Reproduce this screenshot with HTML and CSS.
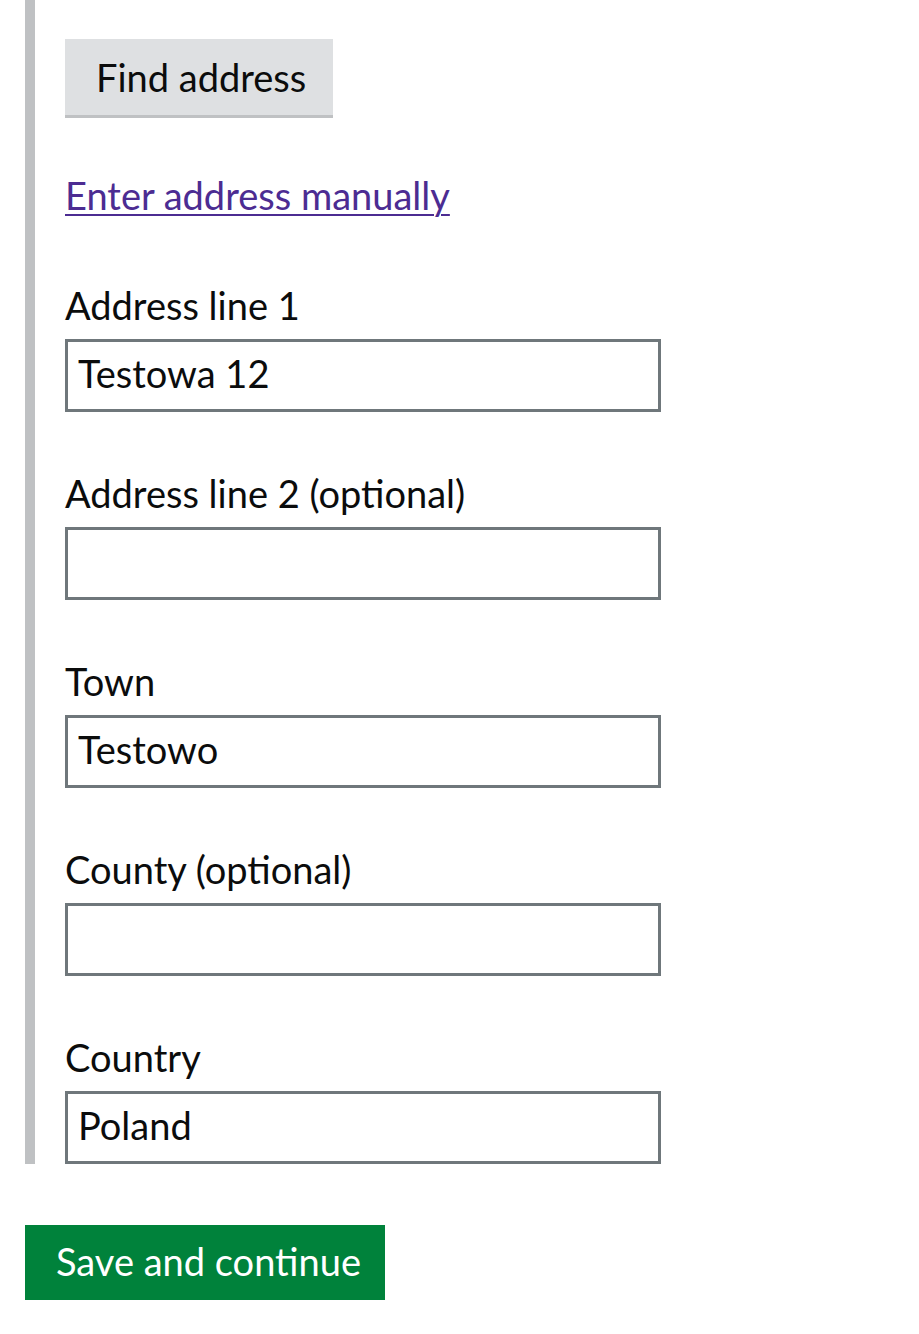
FILE: index.html
```html
<!DOCTYPE html>
<html lang="en">
<head>
<meta charset="utf-8">
<title>Address</title>
<link rel="stylesheet" href="styles.css">
</head>
<body>
<main class="page">
  <div class="fieldset">
    <button class="btn-secondary" type="button">Find address</button>
    <p class="manual"><a class="link" href="#">Enter address manually</a></p>
    <div class="field">
      <label class="label">Address line 1</label>
      <input class="input" type="text" value="Testowa 12">
    </div>
    <div class="field">
      <label class="label">Address line 2 (optional)</label>
      <input class="input" type="text" value="">
    </div>
    <div class="field">
      <label class="label">Town</label>
      <input class="input" type="text" value="Testowo">
    </div>
    <div class="field">
      <label class="label">County (optional)</label>
      <input class="input" type="text" value="">
    </div>
    <div class="field">
      <label class="label">Country</label>
      <input class="input" type="text" value="Poland">
    </div>
  </div>
  <button class="btn-primary" type="submit">Save and continue</button>
</main>
</body>
</html>
```
FILE: styles.css
```css
html, body {
  margin: 0;
  padding: 0;
  background: #ffffff;
}
body {
  font-family: Lato, "Noto Sans", "Liberation Sans", sans-serif;
  color: #0b0c0c;
}
.page {
  padding-left: 25px;
  width: 894px;
}
.fieldset {
  border-left: 10px solid #bfc1c3;
  padding-left: 30px;
  padding-top: 39px;
  display: flex;
  flex-direction: column;
  align-items: flex-start;
}
.btn-secondary {
  font-family: inherit;
  font-size: 38px;
  height: 76px;
  width: 268px;
  padding: 0 0 0 31px;
  text-align: left;
  border: 0;
  border-radius: 0;
  background: #dee0e2;
  color: #0b0c0c;
  box-shadow: 0 3px 0 #bfc1c3;
  margin: 0 0 3px 0;
}
.manual {
  margin: 52px 0 0 0;
  height: 50px;
  line-height: 50px;
  font-size: 38px;
}
.link {
  color: #4c2c92;
  text-decoration: underline;
  text-decoration-thickness: 2px;
  text-underline-offset: 4px;
}
.field {
  display: flex;
  flex-direction: column;
  align-items: flex-start;
}
.fieldset .field:first-of-type {
  margin-top: 60px;
}
.field + .field {
  margin-top: 56px;
}
.label {
  display: block;
  font-size: 38px;
  height: 50px;
  line-height: 50px;
  margin-bottom: 9px;
}
.input {
  box-sizing: border-box;
  width: 596px;
  height: 73px;
  border: 3px solid #6f777b;
  border-radius: 0;
  padding: 0 10px 5px 10px;
  font-family: inherit;
  font-size: 38px;
  color: #0b0c0c;
  background: #ffffff;
  outline: none;
  margin: 0;
}
.btn-primary {
  display: block;
  margin-top: 61px;
  font-family: inherit;
  font-size: 38px;
  height: 75px;
  width: 360px;
  padding: 0 0 3px 31px;
  text-align: left;
  border: 0;
  border-radius: 0;
  background: #00823b;
  color: #ffffff;
  box-shadow: 0 4px 0 #003618;
}
```
